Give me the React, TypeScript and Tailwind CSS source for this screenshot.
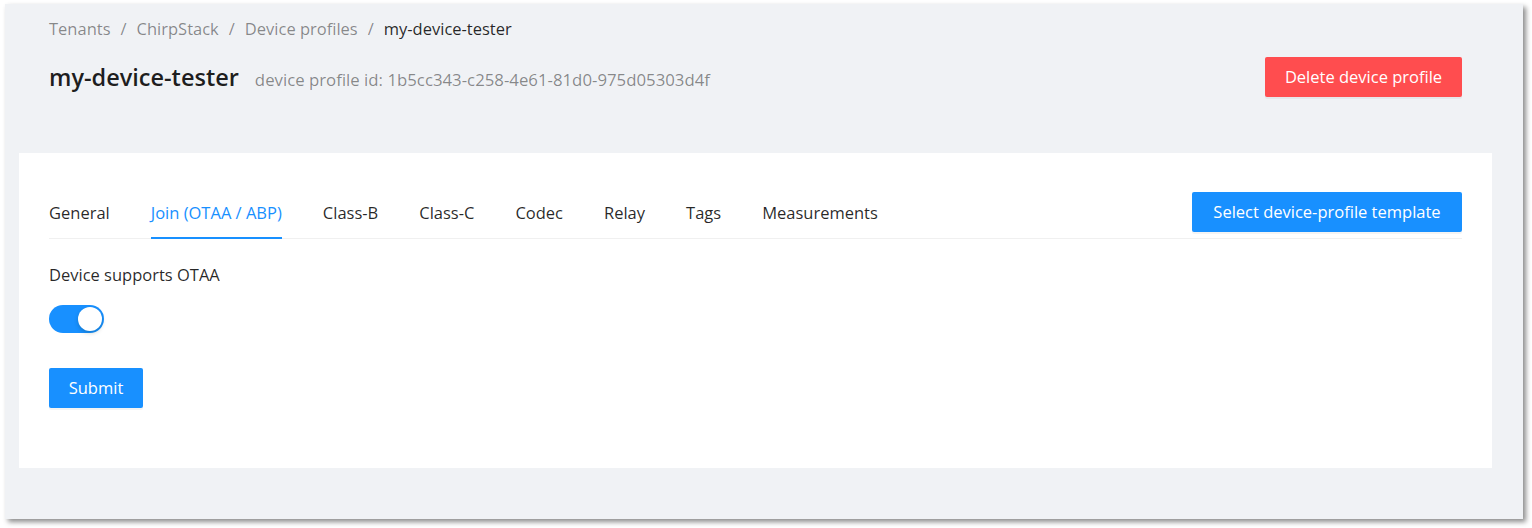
import { useState } from 'react';

const tabs = ['General', 'Join (OTAA / ABP)', 'Class-B', 'Class-C', 'Codec', 'Relay', 'Tags', 'Measurements'];

const crumbs = ['Tenants', 'ChirpStack', 'Device profiles'];

export default function App() {
  const [active, setActive] = useState(1);
  const [otaa, setOtaa] = useState(true);

  return (
    <div
      className="w-[1532px] h-[528px] bg-white pt-[4px] pl-[5px]"
      style={{ fontFamily: '"Open Sans", "Noto Sans", sans-serif' }}
    >
      <div className="w-[1518px] h-[515px] bg-[#f0f2f5] shadow-[3px_3px_5px_rgba(0,0,0,0.45)] flex flex-col">
        {/* page header */}
        <div className="pt-[13px] pl-[44px] pr-[61px]">
          <div className="flex items-center text-[16.5px] leading-6 text-[rgba(0,0,0,0.45)]">
            {crumbs.map((c) => (
              <span key={c} className="flex items-center">
                <span>{c}</span>
                <span className="mx-[10px]">/</span>
              </span>
            ))}
            <span className="text-[rgba(0,0,0,0.85)]">my-device-tester</span>
          </div>
          <div className="mt-[16px] flex items-center justify-between h-10">
            <div className="flex items-baseline gap-4">
              <h1 className="text-[23.5px] font-semibold text-[rgba(0,0,0,0.88)] leading-8">my-device-tester</h1>
              <span className="text-[16.8px] text-[rgba(0,0,0,0.45)]">
                device profile id: 1b5cc343-c258-4e61-81d0-975d05303d4f
              </span>
            </div>
            <button className="h-10 w-[197px] rounded-[2px] bg-[#ff4d4f] text-white text-[16.5px] shadow-[0_2px_0_rgba(0,0,0,0.045)]">
              Delete device profile
            </button>
          </div>
        </div>

        {/* card */}
        <div className="mt-[56px] ml-[14px] mr-[31px] bg-white px-[30px] pt-9 pb-[60px]">
          <div className="flex items-start justify-between border-b border-[#f0f0f0]">
            <div className="flex gap-[41px]">
              {tabs.map((t, i) => (
                <button
                  key={t}
                  onClick={() => setActive(i)}
                  className={
                    'py-3 leading-6 text-[16.5px] border-b-2 -mb-px ' +
                    (i === active
                      ? 'text-[#1890ff] border-[#1890ff]'
                      : 'text-[rgba(0,0,0,0.85)] border-transparent')
                  }
                >
                  {t}
                </button>
              ))}
            </div>
            <button className="mt-[3px] h-10 w-[270px] rounded-[2px] bg-[#1890ff] text-white text-[16.5px] shadow-[0_2px_0_rgba(0,0,0,0.045)]">
              Select device-profile template
            </button>
          </div>

          <div className="mt-6 text-[16.5px] leading-6 text-[rgba(0,0,0,0.85)]">Device supports OTAA</div>
          <button
            onClick={() => setOtaa(!otaa)}
            className={
              'mt-[18px] flex items-center w-[55px] h-7 rounded-full p-[2px] ' +
              (otaa ? 'bg-[#1890ff] justify-end' : 'bg-[rgba(0,0,0,0.25)] justify-start')
            }
          >
            <span className="block w-6 h-6 rounded-full bg-white shadow-[0_2px_4px_rgba(0,35,11,0.2)]" />
          </button>

          <button className="mt-[35px] h-10 w-[94px] rounded-[2px] bg-[#1890ff] text-white text-[16.5px] shadow-[0_2px_0_rgba(0,0,0,0.045)] block">
            Submit
          </button>
        </div>
      </div>
    </div>
  );
}
